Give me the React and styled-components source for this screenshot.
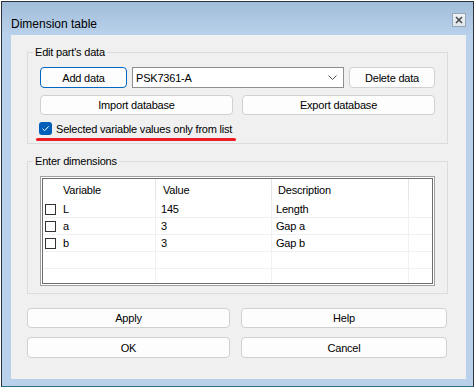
import React from "react";
import styled, { createGlobalStyle } from "styled-components";

const GlobalStyle = createGlobalStyle`
  body {
    margin: 0;
    background: #ffffff;
    font-family: "Liberation Sans", Arial, sans-serif;
  }
`;

const Window = styled.div`
  box-sizing: border-box;
  width: 473px;
  height: 386px;
  margin: 1px;
  border: 1px solid #2e3338;
  border-bottom-color: #2a6f86;
  display: flex;
  flex-direction: column;
  background: #b9d1ea;
`;

const TitleBar = styled.div`
  height: 33px;
  flex-shrink: 0;
  display: flex;
  align-items: flex-start;
  justify-content: space-between;
  padding: 0 7px 0 9px;
  background: linear-gradient(#a2bddb, #b9d1ea);
`;

const Title = styled.div`
  margin-top: 15px;
  font-size: 12px;
  line-height: 14px;
  color: #000;
`;

const CloseButton = styled.div`
  box-sizing: border-box;
  margin-top: 11px;
  width: 14px;
  height: 14px;
  border: 1px solid #98a6b6;
  background: linear-gradient(#eef2f7, #dfe6ee);
  display: flex;
  align-items: center;
  justify-content: center;
`;

const Frame = styled.div`
  flex: 1;
  display: flex;
  padding: 0 7px 7px 9px;
`;

const Client = styled.div`
  flex: 1;
  background: #f0f0f0;
  padding: 10px 18px 0 16px;
  display: flex;
  flex-direction: column;
  font-size: 11px;
  letter-spacing: -0.2px;
  color: #000;
`;

const Group = styled.fieldset`
  margin: 0 0 ${(p) => p.$gapBelow || 0}px 0;
  padding: ${(p) => p.$padTop}px 12px ${(p) => p.$padBottom}px 12px;
  border: 1px solid #dcdcdc;
  min-width: 0;
  display: flex;
  flex-direction: column;
`;

const Legend = styled.legend`
  margin-left: -7px;
  padding: 0 2px;
  font-size: 11px;
  line-height: 14px;
`;

const TopRow = styled.div`
  display: grid;
  grid-template-columns: 87px 1fr 86px;
  column-gap: 5px;
  height: 21px;
`;

const PairRow = styled.div`
  display: grid;
  grid-template-columns: 1fr 1fr;
  column-gap: 9px;
  height: 20px;
  margin-top: 7px;
`;

const Button = styled.button`
  box-sizing: border-box;
  height: 100%;
  margin: 0;
  padding: 0;
  font-family: inherit;
  font-size: 11px;
  letter-spacing: -0.2px;
  color: #000;
  background: #fdfdfd;
  border: 1px solid ${(p) => (p.$default ? "#0067c0" : "#d0d0d0")};
  border-radius: 4px;
`;

const Combo = styled.div`
  box-sizing: border-box;
  height: 100%;
  border: 1px solid #8f8f8f;
  background: #fff;
  display: flex;
  align-items: center;
  justify-content: space-between;
  padding: 0 6px 0 3px;
`;

const CheckRow = styled.div`
  position: relative;
  display: flex;
  align-items: center;
  gap: 4px;
  margin: 7px 0 0 -1px;
  height: 13px;
`;

const CheckBox = styled.span`
  box-sizing: border-box;
  width: 13px;
  height: 13px;
  border-radius: 3px;
  background: #005fb8;
  display: flex;
  align-items: center;
  justify-content: center;
`;

const RedMark = styled.div`
  position: absolute;
  left: -3px;
  bottom: -6px;
  width: 200px;
  height: 3px;
  border-radius: 2px;
  background: #ec1c24;
`;

const TableFrame = styled.div`
  box-sizing: border-box;
  height: 110px;
  border: 1px solid #a0a0a0;
  padding: 1px;
  background: #fff;
`;

const TableInner = styled.div`
  box-sizing: border-box;
  height: 100%;
  border: 1px solid #6e6e6e;
  overflow: hidden;
  background: #fff;
`;

const GridRow = styled.div`
  display: grid;
  grid-template-columns: 113px 116px 137px 1fr;
  height: ${(p) => p.$h}px;
`;

const HeadCell = styled.div`
  display: flex;
  align-items: center;
  padding-left: ${(p) => p.$pad}px;
  border-right: ${(p) => (p.$last ? "none" : "1px solid #e5e5e5")};
`;

const Cell = styled.div`
  display: flex;
  align-items: center;
  gap: 7px;
  padding-left: ${(p) => p.$pad}px;
  border-bottom: 1px solid #f0f0f0;
  border-right: ${(p) => (p.$last ? "none" : "1px solid #f0f0f0")};
`;

const RowBox = styled.span`
  box-sizing: border-box;
  width: 11px;
  height: 11px;
  border: 1px solid #333;
  background: #fff;
`;

const ActionGrid = styled.div`
  display: grid;
  grid-template-columns: 203px 206px;
  grid-template-rows: 20px 21px;
  column-gap: 11px;
  row-gap: 9px;
  margin-top: 14px;
`;

const rows = [
  { name: "L", value: "145", desc: "Length" },
  { name: "a", value: "3", desc: "Gap a" },
  { name: "b", value: "3", desc: "Gap b" },
  null,
  null,
];

export default function App() {
  return (
    <>
      <GlobalStyle />
      <Window>
        <TitleBar>
          <Title>Dimension table</Title>
          <CloseButton>
            <svg width="8" height="8" viewBox="0 0 8 8">
              <path d="M1 1 L7 7 M7 1 L1 7" stroke="#4a4a4a" strokeWidth="1.6" />
            </svg>
          </CloseButton>
        </TitleBar>
        <Frame>
          <Client>
            <Group $padTop={8} $padBottom={8} $gapBelow={10}>
              <Legend>Edit part's data</Legend>
              <TopRow>
                <Button $default>Add data</Button>
                <Combo>
                  <span>PSK7361-A</span>
                  <svg width="9" height="5" viewBox="0 0 9 5">
                    <path d="M0.5 0.5 L4.5 4.5 L8.5 0.5" fill="none" stroke="#555" strokeWidth="1" />
                  </svg>
                </Combo>
                <Button>Delete data</Button>
              </TopRow>
              <PairRow>
                <Button>Import database</Button>
                <Button>Export database</Button>
              </PairRow>
              <CheckRow>
                <CheckBox>
                  <svg width="9" height="9" viewBox="0 0 9 9">
                    <path d="M1.6 4.8 L3.6 6.7 L7.6 2.4" fill="none" stroke="#fff" strokeWidth="1" />
                  </svg>
                </CheckBox>
                <span>Selected variable values only from list</span>
                <RedMark />
              </CheckRow>
            </Group>
            <Group $padTop={8} $padBottom={7}>
              <Legend>Enter dimensions</Legend>
              <TableFrame>
                <TableInner>
                  <GridRow $h={22}>
                    <HeadCell $pad={20}>Variable</HeadCell>
                    <HeadCell $pad={7}>Value</HeadCell>
                    <HeadCell $pad={6}>Description</HeadCell>
                    <HeadCell $last />
                  </GridRow>
                  {rows.map((r, i) => (
                    <GridRow $h={17} key={i}>
                      <Cell $pad={2}>
                        {r && <RowBox />}
                        {r && r.name}
                      </Cell>
                      <Cell $pad={5}>{r && r.value}</Cell>
                      <Cell $pad={4}>{r && r.desc}</Cell>
                      <Cell $last />
                    </GridRow>
                  ))}
                </TableInner>
              </TableFrame>
            </Group>
            <ActionGrid>
              <Button>Apply</Button>
              <Button>Help</Button>
              <Button>OK</Button>
              <Button>Cancel</Button>
            </ActionGrid>
          </Client>
        </Frame>
      </Window>
    </>
  );
}
